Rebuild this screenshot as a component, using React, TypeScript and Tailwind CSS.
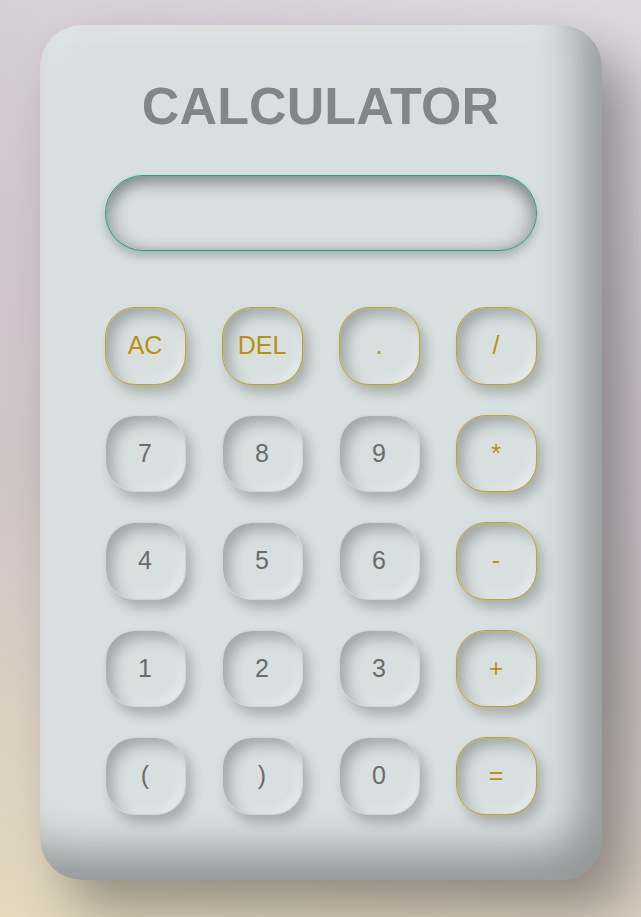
import React, { useState } from 'react';

type Key = { label: string; op?: boolean };

const keys: Key[] = [
  { label: 'AC', op: true },
  { label: 'DEL', op: true },
  { label: '.', op: true },
  { label: '/', op: true },
  { label: '7' },
  { label: '8' },
  { label: '9' },
  { label: '*', op: true },
  { label: '4' },
  { label: '5' },
  { label: '6' },
  { label: '-', op: true },
  { label: '1' },
  { label: '2' },
  { label: '3' },
  { label: '+', op: true },
  { label: '(' },
  { label: ')' },
  { label: '0' },
  { label: '=', op: true },
];

const App: React.FC = () => {
  const [display, setDisplay] = useState<string>('');

  const press = (k: string) => {
    if (k === 'AC') return setDisplay('');
    if (k === 'DEL') return setDisplay((d) => d.slice(0, -1));
    if (k === '=') {
      try {
        // eslint-disable-next-line no-new-func
        setDisplay(String(Function(`return (${display})`)()));
      } catch {
        setDisplay('Error');
      }
      return;
    }
    setDisplay((d) => d + k);
  };

  return (
    <div className="min-h-screen w-full bg-[linear-gradient(200deg,#ddd8df_0%,#d2c6cf_35%,#cfc4c6_60%,#e3d8bc_100%)] pt-[25px] font-['Liberation_Sans',Arial,sans-serif]">
      <div className="mx-auto flex h-[855px] w-[562px] flex-col items-center rounded-[42px] bg-[#d8e0df] px-[65px] shadow-[inset_-22px_-30px_40px_rgba(0,0,0,0.32),inset_8px_8px_20px_rgba(255,255,255,0.25),26px_30px_50px_rgba(0,0,0,0.32)]">
        <h1 className="mt-[53px] text-[52px] leading-[56px] font-bold tracking-[0.1px] text-[#7f8788]">
          CALCULATOR
        </h1>
        <div className="mt-[41px] flex h-[76px] w-full items-center justify-end overflow-hidden rounded-full border border-[#17a293] bg-[#d8e0df] px-8 text-[30px] text-[#6a6a6a] shadow-[inset_0_10px_14px_rgba(0,0,0,0.24),inset_10px_0_14px_rgba(0,0,0,0.14),inset_-10px_0_14px_rgba(0,0,0,0.14),0_6px_10px_rgba(0,0,0,0.2)]">
          {display}
        </div>
        <div className="mt-[56px] grid w-full grid-cols-4 gap-x-[36px] gap-y-[30px]">
          {keys.map((k) => (
            <button
              key={k.label}
              onClick={() => press(k.label)}
              className={`flex h-[77.5px] items-center justify-center rounded-[30px] bg-[#d8e0df] text-[25px] shadow-[inset_7px_7px_14px_rgba(0,0,0,0.26),inset_-4px_-4px_8px_rgba(255,255,255,0.4),6px_8px_12px_rgba(0,0,0,0.22)] ${
                k.op
                  ? 'border border-[#c8a410] text-[#b8920c]'
                  : 'border border-[#cfd6d6] text-[#6b6b6b]'
              }`}
            >
              {k.label}
            </button>
          ))}
        </div>
      </div>
    </div>
  );
};

export default App;
